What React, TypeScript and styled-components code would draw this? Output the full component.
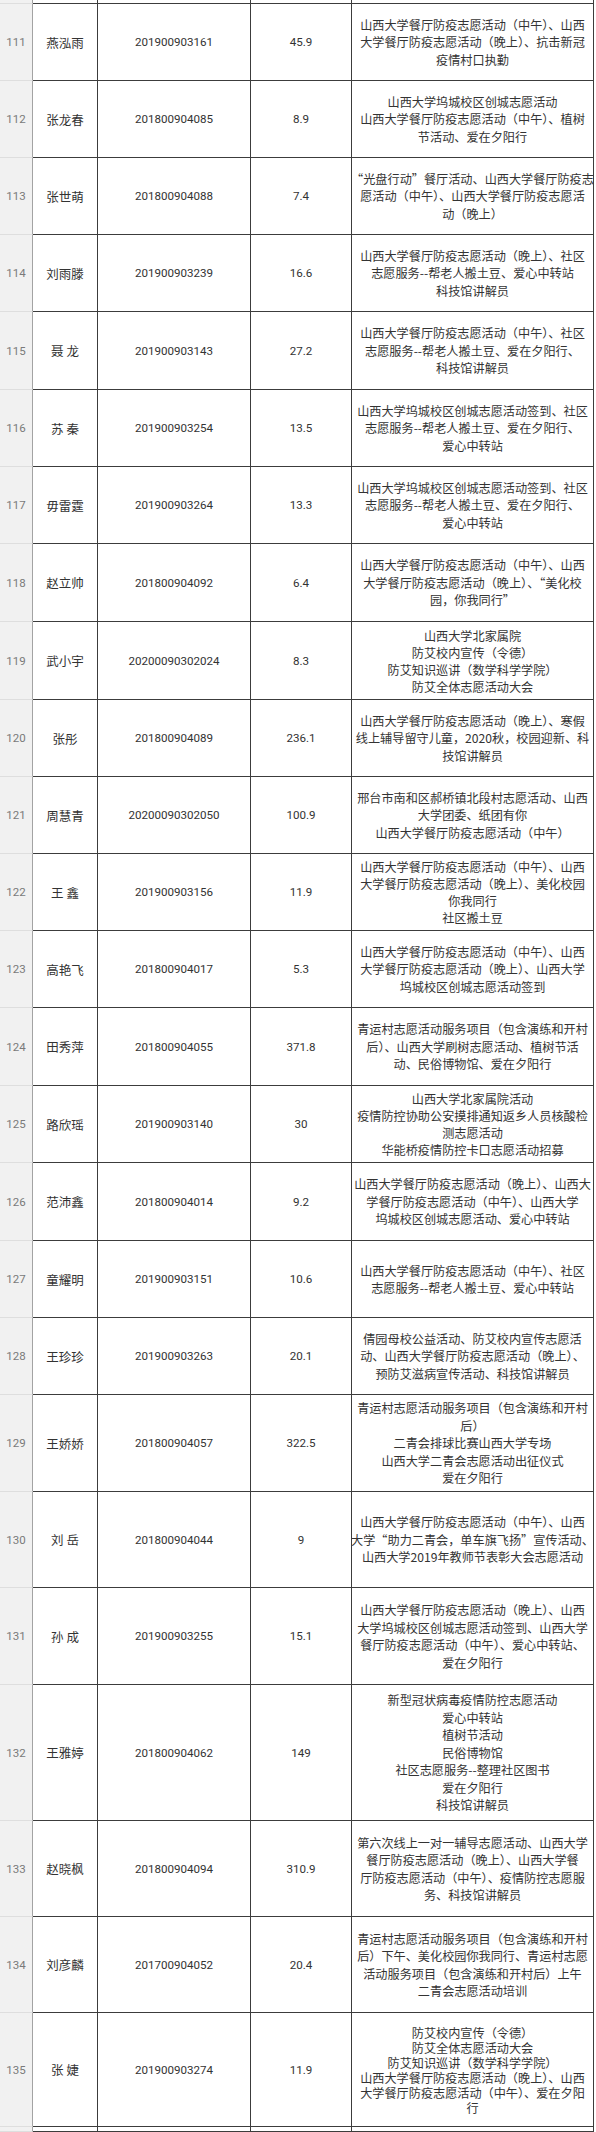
import React from "react";
import styled, { createGlobalStyle, css } from "styled-components";

const GlobalStyle = createGlobalStyle`
  html, body { margin: 0; padding: 0; background: #ffffff; }
  body { font-family: Roboto, "Noto Sans CJK SC", sans-serif; }
`;

type Entry = {
  idx: string;
  name: string;
  sid: string;
  hours: string;
  lines: string[];
  h: number;
  lh?: number;
};

const rows: Entry[] = [
  { idx: "111", name: "燕泓雨", sid: "201900903161", hours: "45.9", h: 77, lines: ["山西大学餐厅防疫志愿活动（中午）、山西", "大学餐厅防疫志愿活动（晚上）、抗击新冠", "疫情村口执勤"] },
  { idx: "112", name: "张龙春", sid: "201800904085", hours: "8.9", h: 77, lines: ["山西大学坞城校区创城志愿活动", "山西大学餐厅防疫志愿活动（中午）、植树", "节活动、爱在夕阳行"] },
  { idx: "113", name: "张世萌", sid: "201800904088", hours: "7.4", h: 77, lines: ["\u201C光盘行动\u201D餐厅活动、山西大学餐厅防疫志", "愿活动（中午）、山西大学餐厅防疫志愿活", "动（晚上）"] },
  { idx: "114", name: "刘雨滕", sid: "201900903239", hours: "16.6", h: 77, lines: ["山西大学餐厅防疫志愿活动（晚上）、社区", "志愿服务--帮老人搬土豆、爱心中转站", "科技馆讲解员"] },
  { idx: "115", name: "聂 龙", sid: "201900903143", hours: "27.2", h: 78, lines: ["山西大学餐厅防疫志愿活动（中午）、社区", "志愿服务--帮老人搬土豆、爱在夕阳行、", "科技馆讲解员"] },
  { idx: "116", name: "苏 秦", sid: "201900903254", hours: "13.5", h: 77, lines: ["山西大学坞城校区创城志愿活动签到、社区", "志愿服务--帮老人搬土豆、爱在夕阳行、", "爱心中转站"] },
  { idx: "117", name: "毋雷霆", sid: "201900903264", hours: "13.3", h: 77, lines: ["山西大学坞城校区创城志愿活动签到、社区", "志愿服务--帮老人搬土豆、爱在夕阳行、", "爱心中转站"] },
  { idx: "118", name: "赵立帅", sid: "201800904092", hours: "6.4", h: 78, lines: ["山西大学餐厅防疫志愿活动（中午）、山西", "大学餐厅防疫志愿活动（晚上）、\u201C美化校", "园，你我同行\u201D"] },
  { idx: "119", name: "武小宇", sid: "20200090302024", hours: "8.3", h: 78, lh: 17, lines: ["山西大学北家属院", "防艾校内宣传（令德）", "防艾知识巡讲（数学科学学院）", "防艾全体志愿活动大会"] },
  { idx: "120", name: "张彤", sid: "201800904089", hours: "236.1", h: 77, lines: ["山西大学餐厅防疫志愿活动（晚上）、寒假", "线上辅导留守儿童，2020秋，校园迎新、科", "技馆讲解员"] },
  { idx: "121", name: "周慧青", sid: "20200090302050", hours: "100.9", h: 77, lines: ["邢台市南和区郝桥镇北段村志愿活动、山西", "大学团委、纸团有你", "山西大学餐厅防疫志愿活动（中午）"] },
  { idx: "122", name: "王 鑫", sid: "201900903156", hours: "11.9", h: 77, lh: 17, lines: ["山西大学餐厅防疫志愿活动（中午）、山西", "大学餐厅防疫志愿活动（晚上）、美化校园", "你我同行", "社区搬土豆"] },
  { idx: "123", name: "高艳飞", sid: "201800904017", hours: "5.3", h: 77, lines: ["山西大学餐厅防疫志愿活动（中午）、山西", "大学餐厅防疫志愿活动（晚上）、山西大学", "坞城校区创城志愿活动签到"] },
  { idx: "124", name: "田秀萍", sid: "201800904055", hours: "371.8", h: 78, lines: ["青运村志愿活动服务项目（包含演练和开村", "后）、山西大学刷树志愿活动、植树节活", "动、民俗博物馆、爱在夕阳行"] },
  { idx: "125", name: "路欣瑶", sid: "201900903140", hours: "30", h: 77, lh: 17, lines: ["山西大学北家属院活动", "疫情防控协助公安摸排通知返乡人员核酸检", "测志愿活动", "华能桥疫情防控卡口志愿活动招募"] },
  { idx: "126", name: "范沛鑫", sid: "201800904014", hours: "9.2", h: 78, lines: ["山西大学餐厅防疫志愿活动（晚上）、山西大", "学餐厅防疫志愿活动（中午）、山西大学", "坞城校区创城志愿活动、爱心中转站"] },
  { idx: "127", name: "童耀明", sid: "201900903151", hours: "10.6", h: 77, lines: ["山西大学餐厅防疫志愿活动（中午）、社区", "志愿服务--帮老人搬土豆、爱心中转站"] },
  { idx: "128", name: "王珍珍", sid: "201900903263", hours: "20.1", h: 77, lines: ["倩园母校公益活动、防艾校内宣传志愿活", "动、山西大学餐厅防疫志愿活动（晚上）、", "预防艾滋病宣传活动、科技馆讲解员"] },
  { idx: "129", name: "王娇娇", sid: "201800904057", hours: "322.5", h: 97, lines: ["青运村志愿活动服务项目（包含演练和开村", "后）", "二青会排球比赛山西大学专场", "山西大学二青会志愿活动出征仪式", "爱在夕阳行"] },
  { idx: "130", name: "刘 岳", sid: "201800904044", hours: "9", h: 96, lines: ["山西大学餐厅防疫志愿活动（中午）、山西", "大学\u201C助力二青会，单车旗飞扬\u201D宣传活动、", "山西大学2019年教师节表彰大会志愿活动"] },
  { idx: "131", name: "孙 成", sid: "201900903255", hours: "15.1", h: 97, lines: ["山西大学餐厅防疫志愿活动（晚上）、山西", "大学坞城校区创城志愿活动签到、山西大学", "餐厅防疫志愿活动（中午）、爱心中转站、", "爱在夕阳行"] },
  { idx: "132", name: "王雅婷", sid: "201800904062", hours: "149", h: 136, lines: ["新型冠状病毒疫情防控志愿活动", "爱心中转站", "植树节活动", "民俗博物馆", "社区志愿服务--整理社区图书", "爱在夕阳行", "科技馆讲解员"] },
  { idx: "133", name: "赵晓枫", sid: "201800904094", hours: "310.9", h: 96, lines: ["第六次线上一对一辅导志愿活动、山西大学", "餐厅防疫志愿活动（晚上）、山西大学餐", "厅防疫志愿活动（中午）、疫情防控志愿服", "务、科技馆讲解员"] },
  { idx: "134", name: "刘彦麟", sid: "201700904052", hours: "20.4", h: 96, lines: ["青运村志愿活动服务项目（包含演练和开村", "后）下午、美化校园你我同行、青运村志愿", "活动服务项目（包含演练和开村后）上午", "二青会志愿活动培训"] },
  { idx: "135", name: "张 婕", sid: "201900903274", hours: "11.9", h: 114, lh: 15, lines: ["防艾校内宣传（令德）", "防艾全体志愿活动大会", "防艾知识巡讲（数学科学学院）", "山西大学餐厅防疫志愿活动（晚上）、山西", "大学餐厅防疫志愿活动（中午）、爱在夕阳", "行"] },
];

const Sheet = styled.div`
  width: 596px;
  display: flex;
  flex-direction: column;
  background: #ffffff;
`;

const Row = styled.div<{ $h: number; $open?: boolean }>`
  display: grid;
  grid-template-columns: 33px 65px 153px 101px 242px;
  height: ${(p) => p.$h}px;
  ${(p) =>
    p.$open &&
    css`
      & > * {
        border-bottom: none;
      }
    `}
`;

const Cell = styled.div`
  box-sizing: border-box;
  display: flex;
  align-items: center;
  justify-content: center;
  text-align: center;
  border-right: 1px solid #3c3c3c;
  border-bottom: 1px solid #3c3c3c;
  color: #333333;
  overflow: hidden;
`;

const IndexCell = styled(Cell)`
  background: #f1f1f1;
  border-right-color: #a3a3a3;
  border-bottom-color: #dedede;
  color: #7a7a7a;
  font-family: Roboto, sans-serif;
  font-size: 11.5px;
`;

const NameCell = styled(Cell)`
  font-family: "Noto Sans CJK SC", sans-serif;
  font-size: 12.5px;
  white-space: pre;
`;

const NumberCell = styled(Cell)`
  font-family: Roboto, sans-serif;
  font-size: 11.6px;
`;

const ActivityCell = styled(Cell)<{ $lh: number }>`
  flex-direction: column;
  font-family: "Noto Sans CJK SC", sans-serif;
  font-size: 12.15px;
  line-height: ${(p) => p.$lh}px;
  padding: 0 2px;
`;

const Line = styled.span`
  display: block;
  white-space: nowrap;
`;

function EmptyRow({ h, open }: { h: number; open?: boolean }) {
  return (
    <Row $h={h} $open={open}>
      <IndexCell />
      <NameCell />
      <NumberCell />
      <NumberCell />
      <ActivityCell $lh={17} />
    </Row>
  );
}

export default function App() {
  return (
    <>
      <GlobalStyle />
      <Sheet>
        <EmptyRow h={4} />
        {rows.map((r) => (
          <Row key={r.idx} $h={r.h}>
            <IndexCell>{r.idx}</IndexCell>
            <NameCell>{r.name}</NameCell>
            <NumberCell>{r.sid}</NumberCell>
            <NumberCell>{r.hours}</NumberCell>
            <ActivityCell $lh={r.lh ?? 17.5}>
              {r.lines.map((l, i) => (
                <Line key={i}>{l}</Line>
              ))}
            </ActivityCell>
          </Row>
        ))}
        <EmptyRow h={5} open />
      </Sheet>
    </>
  );
}
